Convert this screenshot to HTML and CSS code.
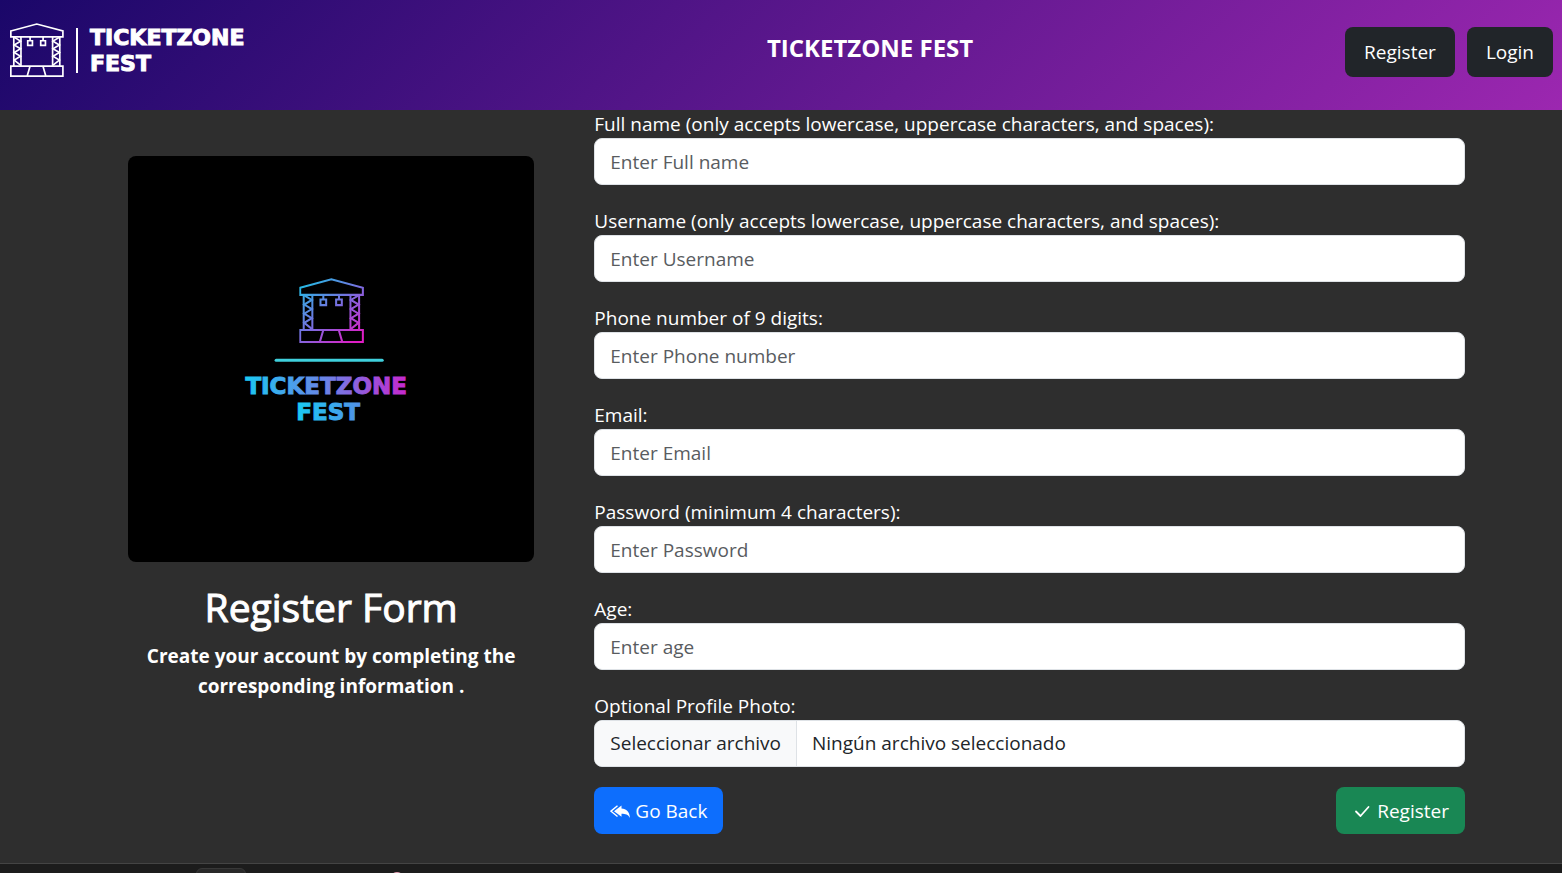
FILE: index.html
```html
<!DOCTYPE html>
<html lang="en">
<head>
<meta charset="utf-8">
<meta name="viewport" content="width=device-width, initial-scale=1">
<title>Ticketzone Fest - Register</title>
<link rel="stylesheet" href="styles.css">
</head>
<body>
<svg class="defs" aria-hidden="true">
  <defs>
    <symbol id="stage" viewBox="0 0 64 64">
      <path d="M1 9.500 31.700 1.200 62.700 9.500V16.500H1ZM1 51H62.700V63H1ZM4.500 16.500V51M13 16.500V51M50.500 16.500V51M59 16.500V51M23.800 51 20.300 63M39 51 42.500 63M23.800 16.500V21M39.200 16.500V21M21 21H26.600V26.600H21ZM36.400 21H42V26.600H36.400Z"/>
      <path class="truss" d="M5 17 12.500 21.500 5 26 12.500 30.500 5 35 12.500 39.500 5 44 12.500 50M58.500 17 51 21.500 58.500 26 51 30.500 58.500 35 51 39.500 58.500 44 51 50"/>
    </symbol>
  </defs>
</svg>
<header class="topbar">
  <a class="brand" href="#" aria-label="Ticketzone Fest home">
    <svg class="brand-icon" aria-hidden="true"><use href="#stage"/></svg>
    <span class="brand-line"></span>
    <span class="brand-name">TICKETZONE<br>FEST</span>
  </a>
  <p class="site-title">TICKETZONE FEST</p>
  <nav class="nav">
    <button class="btn btn-dark" type="button">Register</button>
    <button class="btn btn-dark" type="button">Login</button>
  </nav>
</header>
<main class="content">
  <section class="intro">
    <svg class="poster" viewBox="0 0 406 406" role="img" aria-label="Ticketzone Fest">
      <defs>
        <linearGradient id="stageColor" gradientUnits="userSpaceOnUse" x1="8" y1="4" x2="56" y2="62">
          <stop offset="0" stop-color="#28b8e4"/><stop offset=".5" stop-color="#7b6ce0"/><stop offset="1" stop-color="#e01cc4"/>
        </linearGradient>
        <linearGradient id="nameColor" gradientUnits="userSpaceOnUse" x1="112" y1="0" x2="284" y2="0">
          <stop offset="0" stop-color="#16cdf2"/><stop offset=".5" stop-color="#6c82e6"/><stop offset="1" stop-color="#cc22cc"/>
        </linearGradient>
        <linearGradient id="festColor" gradientUnits="userSpaceOnUse" x1="166" y1="0" x2="234" y2="0">
          <stop offset="0" stop-color="#16cdf2"/><stop offset="1" stop-color="#548ee6"/>
        </linearGradient>
      </defs>
      <rect width="406" height="406"/>
      <svg class="poster-stage" x="171" y="122" width="65" height="65"><use href="#stage"/></svg>
      <path class="poster-rule" d="M148 204H254"/>
      <text class="poster-name" x="198" y="238" fill="url(#nameColor)" stroke="url(#nameColor)">TICKETZONE</text>
      <text class="poster-name" x="200" y="264" fill="url(#festColor)" stroke="url(#festColor)">FEST</text>
    </svg>
    <h1 class="heading">Register Form</h1>
    <p class="lead">Create your account by completing the corresponding information .</p>
  </section>
  <form class="form">
    <div class="field"><label for="fullname">Full name (only accepts lowercase, uppercase characters, and spaces):</label><input class="control" id="fullname" type="text" placeholder="Enter Full name"></div>
    <div class="field"><label for="username">Username (only accepts lowercase, uppercase characters, and spaces):</label><input class="control" id="username" type="text" placeholder="Enter Username"></div>
    <div class="field"><label for="phone">Phone number of 9 digits:</label><input class="control" id="phone" type="tel" placeholder="Enter Phone number"></div>
    <div class="field"><label for="email">Email:</label><input class="control" id="email" type="email" placeholder="Enter Email"></div>
    <div class="field"><label for="password">Password (minimum 4 characters):</label><input class="control" id="password" type="password" placeholder="Enter Password"></div>
    <div class="field"><label for="age">Age:</label><input class="control" id="age" type="text" inputmode="numeric" placeholder="Enter age"></div>
    <div class="field">
      <label for="photo">Optional Profile Photo:</label>
      <div class="control file">
        <span class="file-button">Seleccionar archivo</span>
        <span class="file-name">Ningún archivo seleccionado</span>
        <input class="file-input" id="photo" type="file">
      </div>
    </div>
    <div class="actions">
      <button class="btn btn-blue" type="button">
        <svg class="icon" viewBox="0 0 20 20" aria-hidden="true"><path fill="currentColor" d="M11.500 4.500V7.500C16.500 7.700 19.500 10.500 20 17C18 13.500 15.500 12.800 11.500 12.800V15.800L4 10.200Z"/><path fill="none" stroke="currentColor" stroke-width="1.400" d="M7.500 4.800 1 10.200 7.500 15.500"/></svg>
        Go Back
      </button>
      <button class="btn btn-green" type="submit">
        <svg class="icon" viewBox="0 0 20 20" aria-hidden="true"><path fill="none" stroke="currentColor" stroke-width="1.800" stroke-linecap="round" stroke-linejoin="round" d="M4 10.500 8.500 15 16.500 6"/></svg>
        Register
      </button>
    </div>
  </form>
</main>
<footer class="bottom"><span class="bottom-tab"></span><span class="bottom-dot"></span></footer>
</body>
</html>
```
FILE: styles.css
```css
* { box-sizing: border-box; }

body {
  margin: 0;
  min-height: 100vh;
  display: flex;
  flex-direction: column;
  background: #2e2e2e;
  color: #fff;
  font-family: "Segoe UI", "Open Sans", "Noto Sans", sans-serif;
  font-size: 19px;
  line-height: 28px;
}

.defs { position: absolute; width: 0; height: 0; }

.topbar {
  display: flex;
  align-items: center;
  justify-content: space-between;
  height: 110px;
  padding: 0 9px 6px 10px;
  background: linear-gradient(135deg, #1a0769, #9c27b0);
}

.brand {
  flex: 0 0 385px;
  display: flex;
  align-items: center;
  gap: 12px;
  padding-bottom: 4px;
  color: #fff;
  text-decoration: none;
}

.brand-icon { width: 54px; height: 54px; fill: none; stroke: #fff; stroke-width: 2; }
.truss { stroke-width: 2; }
.brand-line { width: 2px; height: 45px; background: #fff; }

.brand-name {
  padding-top: 2px;
  font: bold 22px/26px "DejaVu Sans", sans-serif;
  -webkit-text-stroke: 1px #fff;
}

.site-title { margin: 0; padding-bottom: 8px; font-size: 24px; font-weight: 700; }
.nav { display: flex; gap: 12px; }

.btn {
  display: inline-flex;
  align-items: center;
  justify-content: center;
  gap: 5px;
  height: 47px;
  padding: 0 16px;
  border: 0;
  border-radius: 8px;
  color: #fff;
  font: inherit;
  cursor: pointer;
}

.btn-dark { height: 50px; padding: 0 19px; background: #212529; }
.btn-blue { background: #0d6efd; }
.btn-green { background: #198754; }
.icon { width: 20px; height: 20px; }

.content {
  flex: 1;
  display: grid;
  grid-template-columns: 7fr 15fr;
  gap: 60px;
  align-items: start;
  padding: 0 97px 29px 128px;
}

.intro { padding-top: 46px; text-align: center; }
.poster { display: block; width: 100%; border-radius: 8px; }
.poster-stage { fill: none; stroke: url(#stageColor); stroke-width: 2; }
.poster-rule { fill: none; stroke: #3fcfdc; stroke-width: 3; stroke-linecap: round; }
.poster-name { font: bold 23px "DejaVu Sans", sans-serif; text-anchor: middle; stroke-width: 1px; }

.heading { margin: 21px 0 10px; font-size: 39px; font-weight: 500; line-height: 48px; -webkit-text-stroke: 1px #fff; }
.lead { margin: 0; font-weight: 700; line-height: 30px; }

.field { display: flex; flex-direction: column; margin-bottom: 22px; }
.field:nth-child(7) { margin-bottom: 20px; }

.control {
  width: 100%;
  height: 47px;
  padding: 0 15px;
  border: 1px solid #dee2e6;
  border-radius: 8px;
  background: #fff;
  color: #212529;
  font: inherit;
}

.control::placeholder { color: #595c5f; opacity: 1; }

.file { position: relative; display: flex; padding: 0; overflow: hidden; line-height: 45px; }
.file-button { padding: 0 15px; border-right: 1px solid #dee2e6; background: #f8f9fa; }
.file-name { padding: 0 15px; }
.file-input { position: absolute; inset: 0; width: 100%; opacity: 0; cursor: pointer; }

.actions { display: flex; justify-content: space-between; }

.bottom {
  position: relative;
  height: 10px;
  overflow: hidden;
  border-top: 1px solid #444;
  background: #1c1c1c;
}

.bottom-tab {
  position: absolute;
  left: 196px;
  top: 4px;
  width: 50px;
  height: 20px;
  border: 1px solid #383838;
  border-radius: 6px;
  background: #292929;
}

.bottom-dot {
  position: absolute;
  left: 390px;
  top: 8px;
  width: 14px;
  height: 14px;
  border-radius: 50%;
  background: #e5a0b4;
}
```
